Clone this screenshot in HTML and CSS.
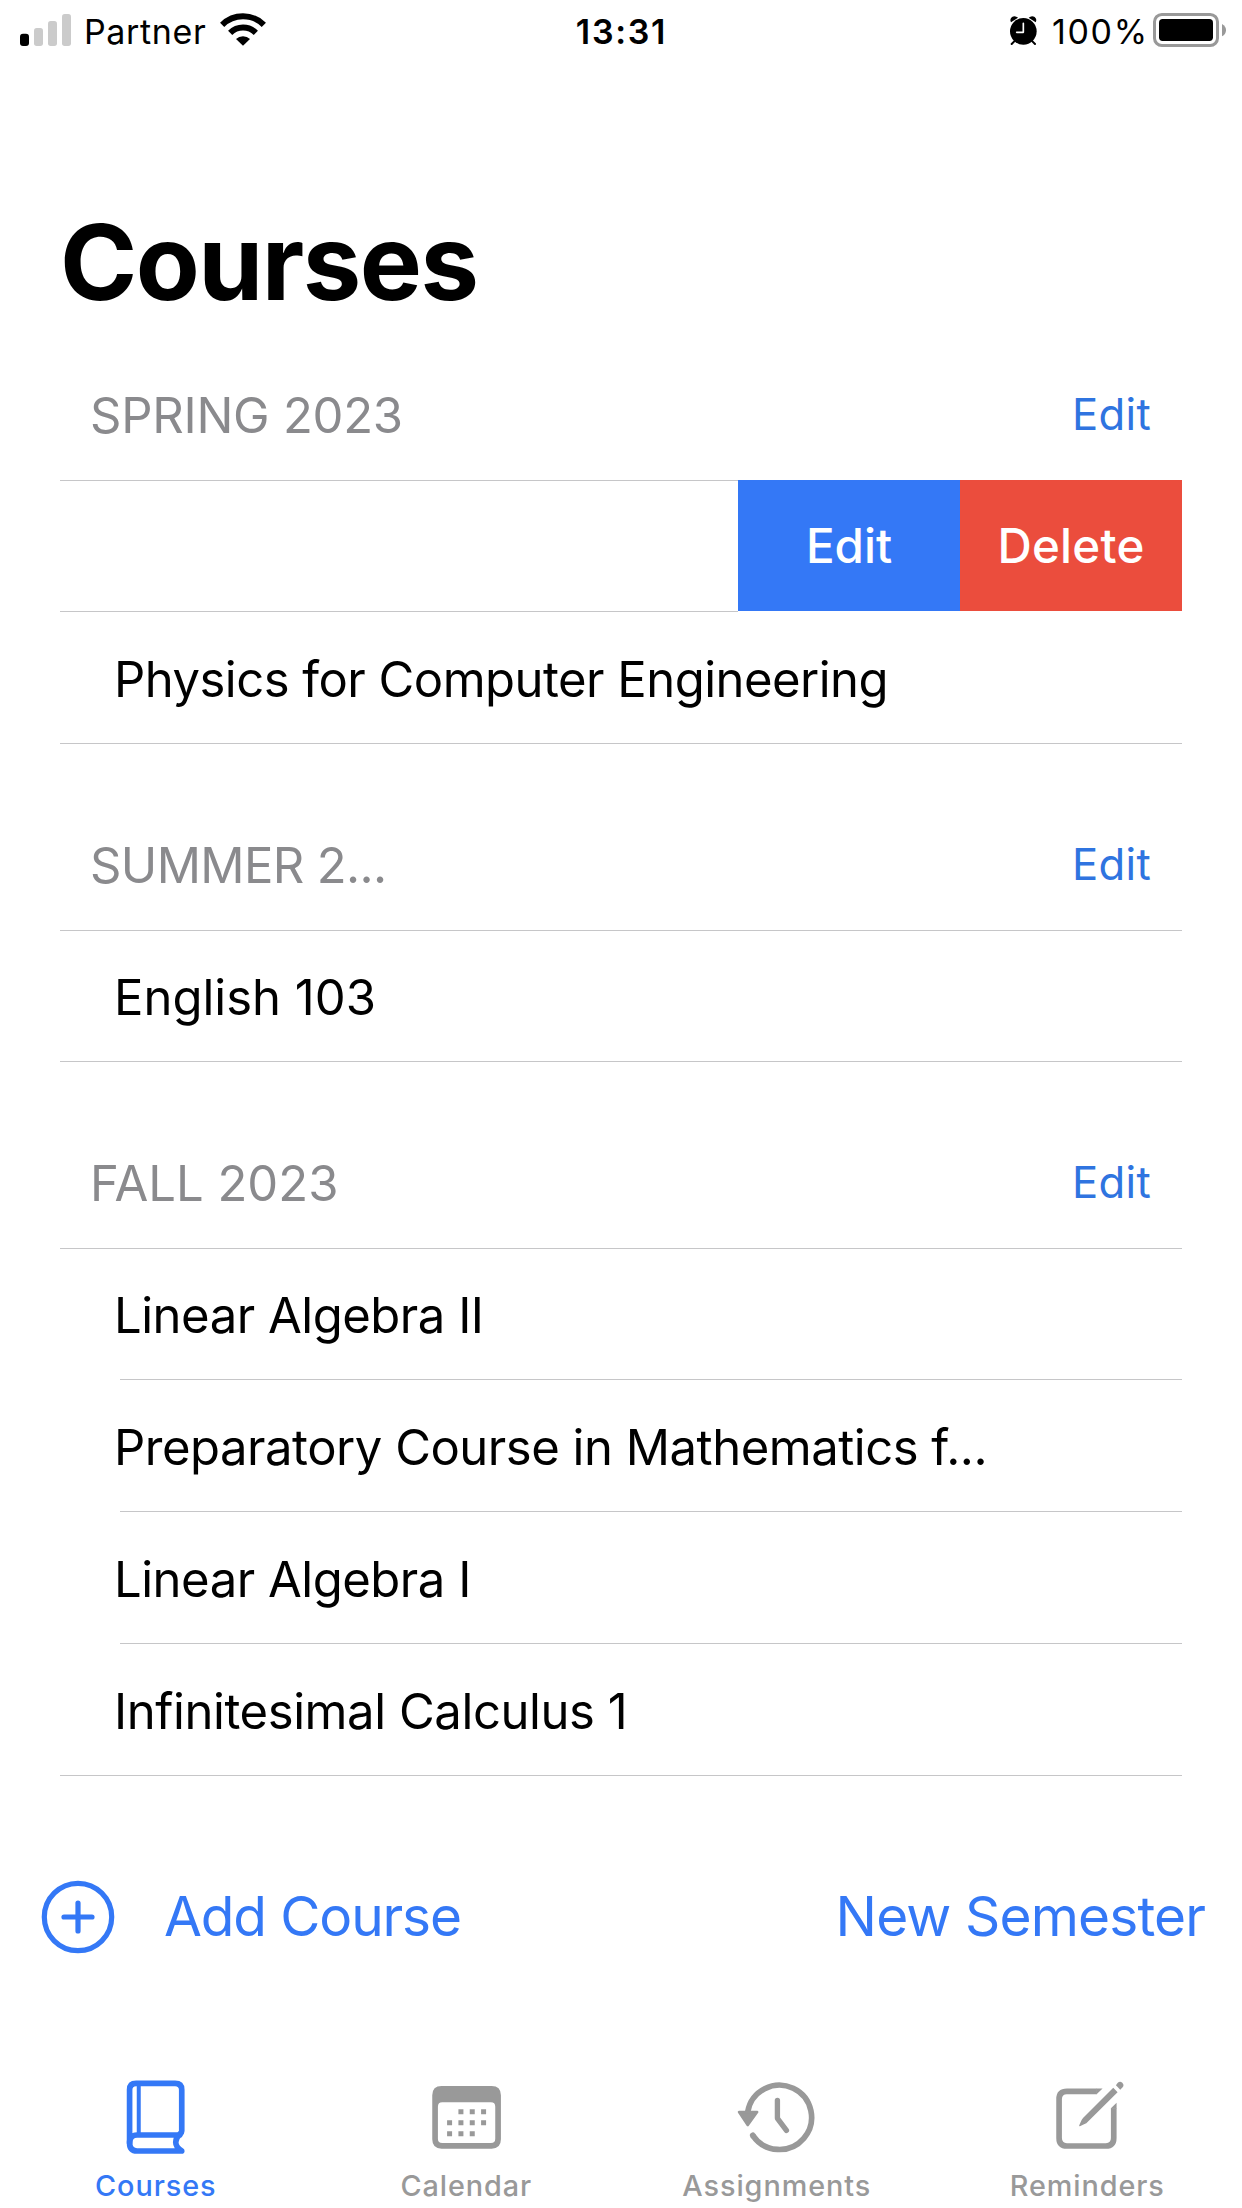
FILE: index.html
```html
<!DOCTYPE html>
<html lang="en">
<head>
<meta charset="utf-8">
<title>Courses</title>
<link rel="stylesheet" href="styles.css">
</head>
<body>
<div class="screen">
  <header class="status">
    <div class="status-left">
      <svg class="signal" viewBox="60 0 153 189">
        <rect x="60" y="101" width="27" height="37" rx="9"/>
        <g fill="#cbcbcb"><rect x="102" y="84" width="27" height="54" rx="8"/><rect x="144" y="63" width="27" height="75" rx="8"/><rect x="186" y="42" width="27" height="96" rx="8"/></g>
      </svg>
      <span class="carrier">Partner</span>
      <svg class="wifi" viewBox="654 0 150 189">
        <path d="M666.5 74.5A89 89 0 0 1 791.5 74.5M690.5 98.5A55 55 0 0 1 767.5 98.5" fill="none" stroke="#000" stroke-width="18"/>
        <path d="M729 137L708 117A30 30 0 0 1 750 117Z"/>
      </svg>
    </div>
    <div class="clock">13:31</div>
    <div class="status-right">
      <svg class="alarm" viewBox="144 0 93 189">
        <circle cx="190" cy="94" r="40"/>
        <path d="M153 67Q148 58 156 51Q165 45 174 53ZM227 67Q232 58 224 51Q215 45 206 53Z"/>
        <path d="M165 122L155 132M215 122L225 132" stroke="#000" stroke-width="6" stroke-linecap="round"/>
        <path d="M190 70V97H170" fill="none" stroke="#fff" stroke-width="5" stroke-linecap="round" stroke-linejoin="round"/>
      </svg>
      <span class="percent">100%</span>
      <svg class="battery" viewBox="573 0 237 189">
        <rect x="583.5" y="43.5" width="189" height="93" rx="22" fill="none" stroke="#999" stroke-width="9"/>
        <rect x="597" y="57" width="162" height="66" rx="11"/>
        <path d="M786 72Q798 79 798 90.500T786 109Z" fill="#999"/>
      </svg>
    </div>
  </header>

  <h1 class="title">Courses</h1>

  <main class="sections">
    <section>
      <div class="head"><h2 class="spring">SPRING 2023</h2><a class="edit">Edit</a></div>
      <div class="swiped"><div class="slid"></div><a class="action blue">Edit</a><a class="action red">Delete</a></div>
      <div class="row last"><span class="physics">Physics for Computer Engineering</span></div>
    </section>
    <section>
      <div class="head"><h2 class="summer">SUMMER 2...</h2><a class="edit">Edit</a></div>
      <div class="row first last"><span class="english">English 103</span></div>
    </section>
    <section>
      <div class="head"><h2 class="fall">FALL 2023</h2><a class="edit">Edit</a></div>
      <div class="row first"><span>Linear Algebra II</span></div>
      <div class="row"><span>Preparatory Course in Mathematics f...</span></div>
      <div class="row"><span>Linear Algebra I</span></div>
      <div class="row last"><span class="calculus">Infinitesimal Calculus 1</span></div>
    </section>
  </main>

  <div class="toolbar">
    <a class="add">
      <svg class="plus" viewBox="0 0 74 74" fill="none" stroke="currentColor" stroke-width="5.200" stroke-linecap="round"><circle cx="37" cy="37" r="33.700"/><path d="M37 23V51M23 37H51"/></svg>
      <span>Add Course</span>
    </a>
    <a class="new">New Semester</a>
  </div>

  <nav class="tabs">
    <a class="tab active">
      <svg viewBox="330.750 690 270 270" fill="none" stroke="currentColor" stroke-width="17" stroke-linecap="round" stroke-linejoin="round">
        <path d="M389.500 909V749Q389.500 730 409 730H526Q546 730 546 749V873Q546 878 541 882"/>
        <path d="M540 885H412Q389.500 885 389.500 909Q389.500 933 412 933H546Q528 922 528 907Q528 893 541 882"/>
        <path d="M417 730V885" stroke-width="12" stroke-linecap="butt"/>
      </svg>
      <span>Courses</span>
    </a>
    <a class="tab">
      <svg viewBox="62.250 30 270 270" fill="currentColor">
        <path fill-rule="evenodd" d="M124 78H274Q302 78 302 106V238Q302 266 274 266H124Q96 266 96 238V106Q96 78 124 78ZM126 127Q113 127 113 140V236Q113 249 126 249H272Q285 249 285 236V140Q285 127 272 127Z"/>
        <path d="M182 147.500V162.500M216 147.500V162.500M250 147.500V162.500M148 180.500V195.500M182 180.500V195.500M216 180.500V195.500M250 180.500V195.500M148 213.500V228.500M182 213.500V228.500M216 213.500V228.500" stroke="currentColor" stroke-width="15"/>
      </svg>
      <span>Calendar</span>
    </a>
    <a class="tab">
      <svg viewBox="153.750 30 270 270" fill="none" stroke="currentColor" stroke-width="17" stroke-linecap="round" stroke-linejoin="round">
        <path d="M219 226A96.500 96.500 0 1 0 204 155" stroke-linecap="butt"/>
        <path d="M219 226L220 227.500"/>
        <path d="M293 121V175L320 211" stroke-width="16"/>
        <path d="M178 156H232L204 195Z" fill="currentColor" stroke-width="8"/>
      </svg>
      <span>Assignments</span>
    </a>
    <a class="tab">
      <svg viewBox="1085.250 30 270 270" fill="currentColor">
        <path d="M1250 94H1160Q1136.500 94 1136.500 117V234Q1136.500 258 1160 258H1277Q1300.500 258 1300.500 234V145" fill="none" stroke="currentColor" stroke-width="17"/>
        <path d="M1249 85.500H1267L1249 102.500ZM1292 146V145L1309 128V146Z"/>
        <path d="M1299 83L1312 97L1222 186Q1219 190 1213 192L1199 198.500Q1196 199 1197 196L1203 182Q1205 177 1209 173Z"/>
        <path d="M1307 76L1312 69Q1319 62 1326 68Q1333 75 1327 82L1320 89Z"/>
      </svg>
      <span>Reminders</span>
    </a>
  </nav>
</div>
</body>
</html>
```
FILE: styles.css
```css
* { box-sizing: border-box; }
body { margin: 0; background: #fff; color: #000; font-family: Inter, "Liberation Sans", sans-serif; }
.screen { width: 1242px; height: 2208px; display: flex; flex-direction: column; overflow: hidden; white-space: nowrap; }
h1, h2 { margin: 0; }

.status { height: 63px; flex: none; display: grid; grid-template-columns: 1fr auto 1fr; align-items: center; padding: 0 12px 0 20px; font-size: 34px; line-height: 63px; }
.status-left, .status-right { display: flex; }
.status-right { justify-content: flex-end; }
.status svg { height: 63px; flex: none; }
.signal { width: 51px; }
.carrier { width: 134px; margin-left: 13px; letter-spacing: .65px; }
.wifi { width: 50px; }
.clock { font-weight: 600; letter-spacing: 1.7px; margin-right: 7px; }
.alarm { width: 31px; }
.percent { width: 99px; margin-left: 13px; letter-spacing: 1.66px; }
.battery { width: 79px; }

.title { flex: none; margin: 139px 0 28px 60px; height: 120px; line-height: 120px; font-size: 104.5px; font-weight: 700; letter-spacing: -1.55px; }

.sections { flex: none; padding: 0 60px; display: flex; flex-direction: column; gap: 56px; }
.head { height: 131px; display: flex; align-items: center; justify-content: space-between; padding: 2px 31px 0 30px; border-bottom: 1px solid #c6c6c8; }
.head h2 { font-size: 49px; font-weight: 400; color: #8a8a8d; line-height: 60px; }
.spring { letter-spacing: -.25px; }
.summer { letter-spacing: -.63px; }
.fall { letter-spacing: 0; }
.edit { font-size: 43.6px; letter-spacing: .3px; color: #2f74e0; line-height: 60px; padding-bottom: 2px; }
.row { height: 132px; margin-left: 60px; border-bottom: 1px solid #c6c6c8; display: flex; align-items: center; padding-top: 3px; font-size: 49px; letter-spacing: -.48px; }
.row span { margin-left: -6px; }
.row.first { height: 131px; padding-top: 2px; }
.row.last { margin-left: 0; padding-left: 60px; }
.row .english { letter-spacing: 0; }
.row .physics { letter-spacing: -.52px; }
.row .calculus { letter-spacing: -.42px; }
.swiped { height: 132px; margin-top: -1px; display: grid; grid-template-columns: 678px 222px 222px; }
.slid { border-top: 1px solid #c6c6c8; border-bottom: 1px solid #c6c6c8; }
.action { height: 131px; display: flex; align-items: center; justify-content: center; color: #fff; font-size: 47.5px; font-weight: 500; }
.blue { background: #3478f6; }
.red { background: #eb4d3d; letter-spacing: .25px; }

.toolbar { flex: none; height: 281px; display: flex; align-items: center; justify-content: space-between; padding: 0 37px 0 41px; color: #3478f6; font-size: 55px; letter-spacing: -.87px; }
.add { display: flex; align-items: center; gap: 49px; letter-spacing: -1.13px; }
.add span, .new { padding-bottom: 2px; }
.plus { width: 74px; height: 74px; }

.tabs { flex: none; display: grid; grid-template-columns: repeat(4, 1fr); margin-top: 13px; }
.tab { display: flex; flex-direction: column; align-items: center; gap: 9px; color: #999; font-size: 28.8px; font-weight: 500; line-height: 34px; letter-spacing: .93px; }
.tab span { padding-left: 1px; }
.tab svg { width: 90px; height: 90px; }
.active { color: #3478f6; }
```
